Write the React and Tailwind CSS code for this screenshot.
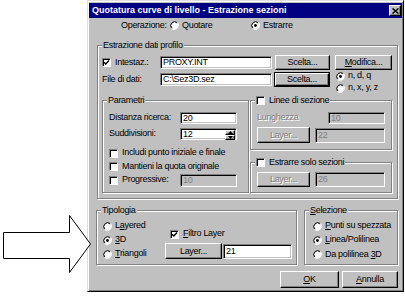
import React from 'react';

const sunken = 'border border-t-[#808080] border-l-[#808080] border-r-white border-b-white';
const raised = 'border border-t-white border-l-white border-r-black border-b-black shadow-[inset_-1px_-1px_0_#808080]';
const dis = 'text-[#808080] [text-shadow:1px_1px_0_#fff]';

const U = ({ children }) => <span className="underline underline-offset-[1px]">{children}</span>;

const Edit = ({ className = '', value, disabled, spin }) => (
  <div className={`box-border flex items-center ${sunken} shadow-[inset_1px_1px_0_#000,inset_-1px_-1px_0_#c0c0c0] ${disabled ? 'bg-[#c0c0c0] text-[#808080]' : 'bg-white text-black'} ${className}`}>
    <span className="pl-[2px] flex-1 leading-none">{value}</span>
    {spin && (
      <div className="flex flex-col h-full py-[1px] pr-[1px] w-[11px]">
        <div className={`flex-1 bg-[#c0c0c0] ${raised} flex items-center justify-center`}>
          <svg width="5" height="3" viewBox="0 0 5 3"><path d="M2.5 0 L5 3 L0 3 Z" fill="#000" /></svg>
        </div>
        <div className={`flex-1 bg-[#c0c0c0] ${raised} flex items-center justify-center`}>
          <svg width="5" height="3" viewBox="0 0 5 3"><path d="M0 0 L5 0 L2.5 3 Z" fill="#000" /></svg>
        </div>
      </div>
    )}
  </div>
);

const Btn = ({ className = '', children, disabled, def }) => {
  const inner = (
    <div className={`box-border bg-[#c0c0c0] ${raised} flex items-center justify-center leading-none ${disabled ? dis : 'text-black'} ${def ? 'w-full h-full' : className}`}>
      {children}
    </div>
  );
  if (def) return <div className={`box-border border border-black ${className}`}>{inner}</div>;
  return inner;
};

const Check = ({ checked }) => (
  <div className={`box-border w-[9px] h-[9px] shrink-0 bg-white ${sunken} shadow-[inset_1px_1px_0_#000] flex items-center justify-center`}>
    {checked && (
      <svg width="7" height="7" viewBox="0 0 7 7">
        <polyline points="1,3.2 2.8,5 6,1.6" fill="none" stroke="#000" strokeWidth="1.4" />
      </svg>
    )}
  </div>
);

const Radio = ({ checked }) => (
  <svg width="9" height="9" viewBox="0 0 12 12" className="shrink-0">
    <path d="M10.2 1.8 A6 6 0 0 0 1.8 10.2" fill="none" stroke="#808080" strokeWidth="1.3" />
    <path d="M1.8 10.2 A6 6 0 0 0 10.2 1.8" fill="none" stroke="#fff" strokeWidth="1.3" />
    <circle cx="6" cy="6" r="4.6" fill="#fff" />
    <path d="M9.4 2.6 A4.7 4.7 0 0 0 2.6 9.4" fill="none" stroke="#000" strokeWidth="1.2" />
    {checked && <circle cx="6" cy="6" r="1.9" fill="#000" />}
  </svg>
);

const Group = ({ title, className = '', children }) => (
  <div className={`box-border relative border border-[#808080] shadow-[1px_1px_0_#fff,inset_1px_1px_0_#fff] ${className}`}>
    <div className="absolute -top-[7px] left-[4px] h-[12px] px-[1px] bg-[#c0c0c0] flex items-center leading-none">{title}</div>
    {children}
  </div>
);

export default function App() {
  return (
    <div className="relative w-[405px] h-[296px] bg-white pl-[87px] font-['Liberation_Sans',Arial,sans-serif] text-[9px] tracking-[-0.3px] whitespace-nowrap text-black overflow-hidden">
      {/* dialog */}
      <div className="box-border w-[317px] h-[292px] bg-[#c0c0c0] border border-t-[#dfdfdf] border-l-[#dfdfdf] border-r-black border-b-black shadow-[inset_1px_1px_0_#fff,inset_-1px_-1px_0_#808080] p-[1px] flex flex-col">
        {/* title */}
        <div className="mt-[1px] h-[15px] bg-[#000080] flex items-center justify-between pl-[3px] pr-[1px]">
          <span className="text-white font-bold text-[9px] tracking-normal leading-none">Quotatura curve di livello - Estrazione sezioni</span>
          <Btn className="w-[12px] h-[11px]">
            <svg width="7" height="6" viewBox="0 0 7 6">
              <path d="M0.5 0.5 L6.5 5.5 M6.5 0.5 L0.5 5.5" stroke="#000" strokeWidth="1.5" />
            </svg>
          </Btn>
        </div>

        {/* operazione */}
        <div className="mt-[1px] h-[13px] flex items-center pl-[32px]">
          <span className="w-[49px]">Operazione:</span>
          <div className="w-[81px] flex items-center gap-[3px]"><Radio /><span>Quotare</span></div>
          <div className="flex items-center gap-[3px]"><Radio checked /><span>Estrarre</span></div>
        </div>

        {/* estrazione dati profilo */}
        <Group title="Estrazione dati profilo" className="ml-[8px] mt-[13px] w-[301px] h-[154px]">
          <div className="flex flex-col pt-[9px] pl-[4px]">
            <div className="flex items-center h-[15px]">
              <div className="w-[58px] flex items-center gap-[4px]"><Check checked /><span>Intestaz.:</span></div>
              <Edit className="w-[112px] h-[13px]" value="PROXY.INT" />
              <Btn className="ml-[3px] w-[55px] h-[15px]">Scelta...</Btn>
              <Btn className="ml-[5px] w-[57px] h-[15px]"><span><U>M</U>odifica...</span></Btn>
            </div>
            <div className="flex items-center h-[15px] mt-[2px]">
              <span className="w-[58px]">File di dati:</span>
              <Edit className="w-[112px] h-[13px]" value="C:\Sez3D.sez" />
              <Btn def className="ml-[2px] w-[56px] h-[15px]">Scelta...</Btn>
              <div className="ml-[6px] self-start -mt-[2px] flex flex-col">
                <div className="h-[12px] flex items-center gap-[3px]"><Radio checked /><span>n, d, q</span></div>
                <div className="h-[12px] flex items-center gap-[3px]"><Radio /><span>n, x, y, z</span></div>
              </div>
            </div>

            <div className="flex mt-[13px]">
              <Group title="Parametri" className="w-[147px] h-[93px]">
                <div className="flex flex-col pt-[11px] pl-[6px]">
                  <div className="flex items-center h-[12px]">
                    <span className="w-[71px]">Distanza ricerca:</span>
                    <Edit className="w-[57px] h-[12px]" value="20" />
                  </div>
                  <div className="flex items-center h-[12px] mt-[4px]">
                    <span className="w-[71px]">Suddivisioni:</span>
                    <Edit className="w-[57px] h-[12px]" value="12" spin />
                  </div>
                  <div className="flex items-center h-[14px] mt-[6px] gap-[4px]"><Check /><span>Includi punto iniziale e finale</span></div>
                  <div className="flex items-center h-[13px] gap-[4px]"><Check /><span>Mantieni la quota originale</span></div>
                  <div className="flex items-center h-[14px]">
                    <div className="w-[71px] flex items-center gap-[4px]"><Check /><span>Progressive:</span></div>
                    <Edit className="w-[57px] h-[13px]" value="10" disabled />
                  </div>
                </div>
              </Group>

              <div className="ml-[1px] w-[142px] flex flex-col">
                <Group title={<span className="flex items-center gap-[4px]"><Check /><span>Linee di sezione</span></span>} className="h-[50px]">
                  <div className="flex flex-col pt-[11px] pl-[6px]">
                    <div className="flex items-center h-[12px]">
                      <span className={`w-[71px] ${dis}`}>Lunghezza</span>
                      <Edit className="w-[57px] h-[12px]" value="10" disabled />
                    </div>
                    <div className="flex items-center mt-[3px]">
                      <Btn disabled className="w-[53px] h-[16px]">Layer...</Btn>
                      <Edit className="ml-[5px] w-[70px] h-[15px]" value="22" disabled />
                    </div>
                  </div>
                </Group>
                <Group title={<span className="flex items-center gap-[4px]"><Check /><span>Estrarre solo sezioni</span></span>} className="mt-[12px] h-[31px]">
                  <div className="flex items-center pt-[9px] pl-[6px]">
                    <Btn disabled className="w-[53px] h-[15px]">Layer...</Btn>
                    <Edit className="ml-[5px] w-[70px] h-[15px]" value="26" disabled />
                  </div>
                </Group>
              </div>
            </div>
          </div>
        </Group>

        {/* tipologia / selezione */}
        <div className="flex mt-[11px]">
          <Group title="Tipologia" className="ml-[7px] w-[201px] h-[55px]">
            <div className="flex pt-[8px] pl-[6px]">
              <div className="w-[62px] flex flex-col">
                <div className="h-[14px] flex items-center gap-[3px]"><Radio /><span>L<U>a</U>yered</span></div>
                <div className="h-[14px] flex items-center gap-[3px]"><Radio checked /><span><U>3</U>D</span></div>
                <div className="h-[14px] flex items-center gap-[3px]"><Radio /><span><U>T</U>riangoli</span></div>
              </div>
              <div className="flex flex-col">
                <div className="h-[12px] mt-[9px] pl-[5px] flex items-center gap-[4px]"><Check checked /><span><U>F</U>iltro Layer</span></div>
                <div className="flex items-center mt-[3px]">
                  <Btn className="w-[57px] h-[16px]">Layer...</Btn>
                  <Edit className="ml-[1px] w-[69px] h-[15px]" value="21" />
                </div>
              </div>
            </div>
          </Group>
          <Group title={<span><U>S</U>elezione</span>} className="ml-[7px] w-[94px] h-[55px]">
            <div className="flex flex-col pt-[8px] pl-[8px]">
              <div className="h-[14px] flex items-center gap-[3px]"><Radio /><span><U>P</U>unti su spezzata</span></div>
              <div className="h-[14px] flex items-center gap-[3px]"><Radio checked /><span><U>L</U>inea/Polilinea</span></div>
              <div className="h-[15px] flex items-center gap-[3px]"><Radio /><span>Da polilinea <U>3</U>D</span></div>
            </div>
          </Group>
        </div>

        {/* buttons */}
        <div className="flex justify-end pr-[4px] mt-[6px]">
          <Btn className="w-[59px] h-[17px]"><span><U>O</U>K</span></Btn>
          <Btn className="ml-[3px] w-[56px] h-[17px]"><span><U>A</U>nnulla</span></Btn>
        </div>
      </div>

      {/* arrow */}
      <svg className="absolute left-0 top-[212px]" width="95" height="64" viewBox="0 0 95 64">
        <polygon points="3.5,20.5 69.5,20.5 69.5,3.5 90.5,32 69.5,60.5 69.5,46.5 3.5,46.5" fill="#fff" stroke="#000" strokeWidth="1" />
      </svg>
    </div>
  );
}
